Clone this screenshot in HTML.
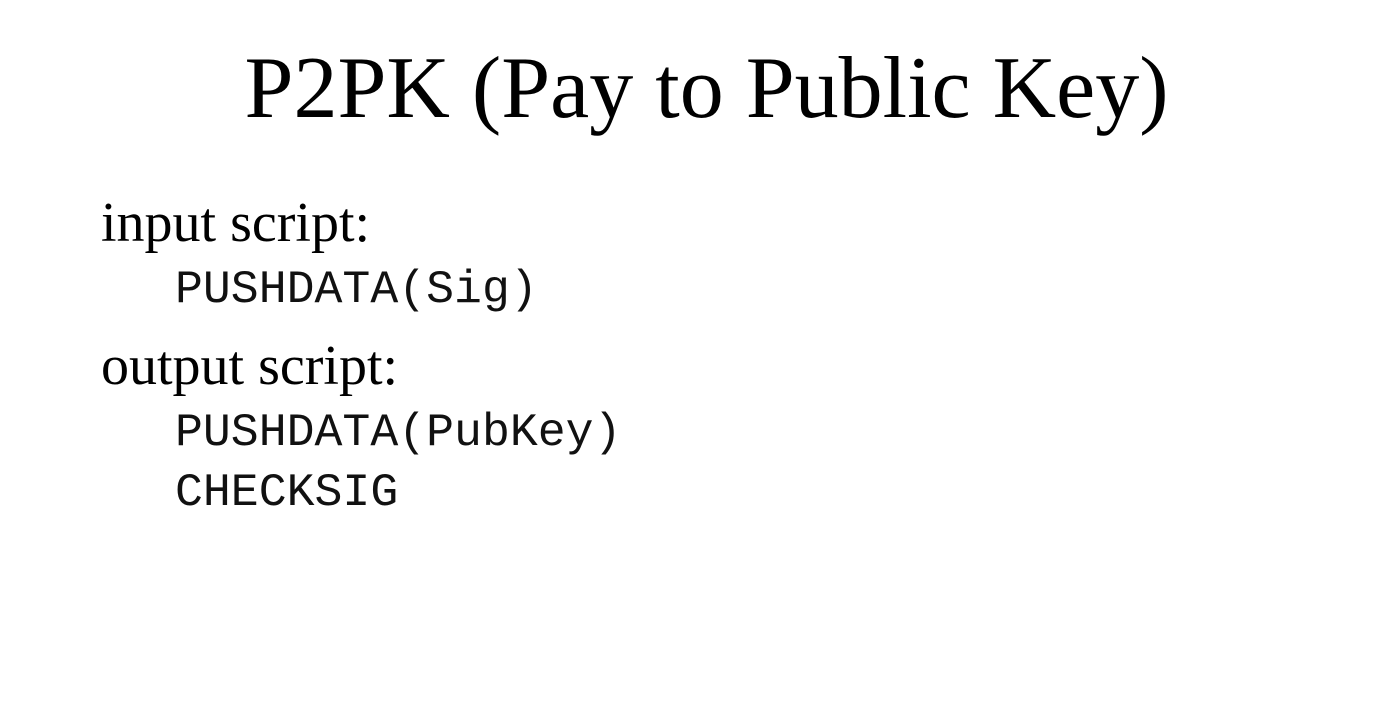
<!DOCTYPE html>
<html><head><meta charset="utf-8"><style>
html,body{margin:0;padding:0;background:#fff;width:1396px;height:724px;overflow:hidden;position:relative;color:#000}
div{position:absolute;line-height:1;white-space:nowrap}
.s{font-family:"Liberation Serif",serif;font-size:56px;left:101px}
.m{font-family:"Liberation Mono",monospace;font-size:46.5px;left:175px;font-weight:300;color:#111}
</style></head><body>
<div style="font-family:'Liberation Serif',serif;font-size:88px;left:0;width:1413px;text-align:center;top:45px">P2PK (Pay to Public Key)</div>
<div class="s" style="top:195px">input script:</div>
<div class="m" style="top:267px">PUSHDATA(Sig)</div>
<div class="s" style="top:338px">output script:</div>
<div class="m" style="top:410px">PUSHDATA(PubKey)</div>
<div class="m" style="top:470px">CHECKSIG</div>
</body></html>
